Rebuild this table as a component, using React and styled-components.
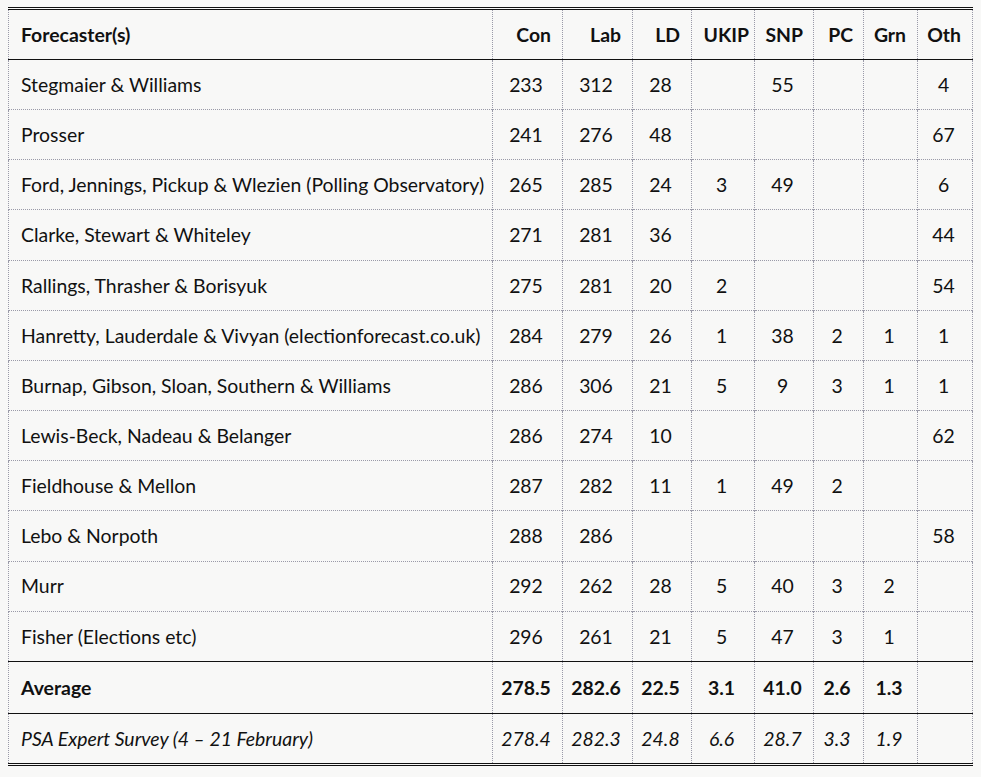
import React from "react"
import styled, { createGlobalStyle } from "styled-components"

const GlobalStyle = createGlobalStyle`
  html, body {
    margin: 0;
    background: #f8f8f7;
  }
`

const Page = styled.div`
  padding: 7px 0 0 8px;
  font-family: Lato, "Liberation Sans", sans-serif;
  font-size: 19.4px;
  color: #111;
`

const Table = styled.table`
  width: 964px;
  table-layout: fixed;
  border-collapse: collapse;
  border-top: 3px double #111;
  border-bottom: 3px double #111;
`

const Col = styled.col`
  width: ${(p) => p.$w}px;
`

const Row = styled.tr`
  height: ${(p) => p.$h || 50.17}px;
  border-top: ${(p) => (p.$solid ? "1px solid #111" : "1px dotted #9a9aa8")};
  font-weight: ${(p) => (p.$bold ? 700 : 400)};
  font-style: ${(p) => (p.$italic ? "italic" : "normal")};
`

const HeadRow = styled.tr`
  height: 51px;
  font-weight: 700;
`

const Cell = styled.td`
  padding: ${(p) =>
    p.$name ? "0 4px 0 12px" : p.$head ? `0 ${p.$pad ?? 11}px 0 0` : "0 3px 0 0"};
  text-align: ${(p) => (p.$name ? "left" : p.$head ? "right" : "center")};
  vertical-align: middle;
  white-space: nowrap;
  border-left: 1px dotted #9a9aa8;
  border-right: 1px dotted #9a9aa8;
  line-height: 1;
`

const HeadCell = styled(Cell).attrs({ as: "th" })`
  font-weight: 700;
`

const widths = [484, 70, 70, 59, 63, 59, 50, 54, 55]
const parties = [
  { label: "Con" },
  { label: "Lab" },
  { label: "LD" },
  { label: "UKIP", pad: 5 },
  { label: "SNP", pad: 10 },
  { label: "PC", pad: 10 },
  { label: "Grn" },
  { label: "Oth" },
]

const rows = [
  ["Stegmaier & Williams", "233", "312", "28", "", "55", "", "", "4"],
  ["Prosser", "241", "276", "48", "", "", "", "", "67"],
  ["Ford, Jennings, Pickup & Wlezien (Polling Observatory)", "265", "285", "24", "3", "49", "", "", "6"],
  ["Clarke, Stewart & Whiteley", "271", "281", "36", "", "", "", "", "44"],
  ["Rallings, Thrasher & Borisyuk", "275", "281", "20", "2", "", "", "", "54"],
  ["Hanretty, Lauderdale & Vivyan (electionforecast.co.uk)", "284", "279", "26", "1", "38", "2", "1", "1"],
  ["Burnap, Gibson, Sloan, Southern & Williams", "286", "306", "21", "5", "9", "3", "1", "1"],
  ["Lewis-Beck, Nadeau & Belanger", "286", "274", "10", "", "", "", "", "62"],
  ["Fieldhouse & Mellon", "287", "282", "11", "1", "49", "2", "", ""],
  ["Lebo & Norpoth", "288", "286", "", "", "", "", "", "58"],
  ["Murr", "292", "262", "28", "5", "40", "3", "2", ""],
  ["Fisher (Elections etc)", "296", "261", "21", "5", "47", "3", "1", ""],
]

const average = ["Average", "278.5", "282.6", "22.5", "3.1", "41.0", "2.6", "1.3", ""]
const survey = ["PSA Expert Survey (4 \u2013 21 February)", "278.4", "282.3", "24.8", "6.6", "28.7", "3.3", "1.9", ""]

const renderCells = (r) =>
  r.map((v, i) => (
    <Cell key={i} $name={i === 0}>
      {v}
    </Cell>
  ))

export default function App() {
  return (
    <Page>
      <GlobalStyle />
      <Table>
        <colgroup>
          {widths.map((w, i) => (
            <Col key={i} $w={w} />
          ))}
        </colgroup>
        <thead>
          <HeadRow>
            <HeadCell $name>Forecaster(s)</HeadCell>
            {parties.map((p) => (
              <HeadCell key={p.label} $head $pad={p.pad}>
                {p.label}
              </HeadCell>
            ))}
          </HeadRow>
        </thead>
        <tbody>
          {rows.map((r, i) => (
            <Row key={i} $solid={i === 0}>
              {renderCells(r)}
            </Row>
          ))}
          <Row $solid $bold $h={52}>
            {renderCells(average)}
          </Row>
          <Row $solid $italic $h={51}>
            {renderCells(survey)}
          </Row>
        </tbody>
      </Table>
    </Page>
  )
}
